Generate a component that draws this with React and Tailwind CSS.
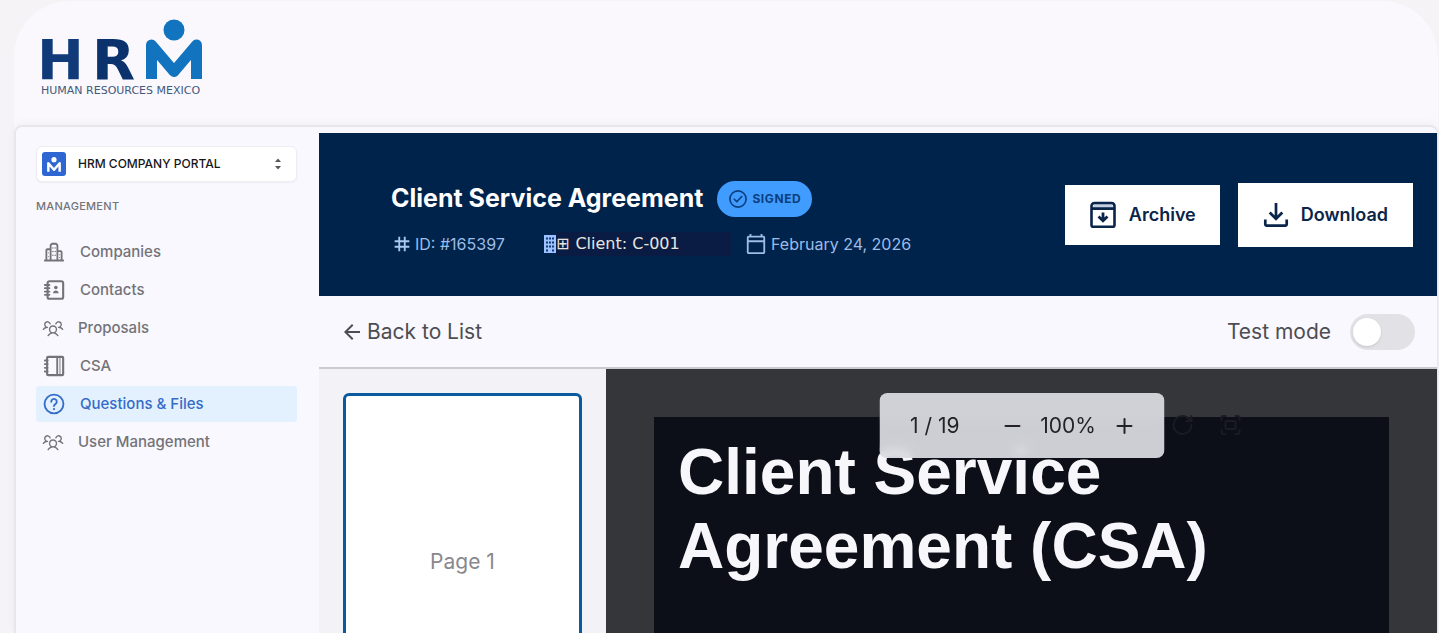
import React, { useState } from "react";
import { MdTag, MdOutlineCalendarToday, MdArrowBack } from "react-icons/md";
import { PiUsersThree } from "react-icons/pi";
import { Fullscreen, Minus, Plus, RotateCw } from "lucide-react";

function FigureMark({ className }) {
  return (
    <svg viewBox="0 0 56 61" className={className} fill="none" aria-hidden="true">
      <circle cx="28" cy="11" r="10.5" fill="currentColor" />
      <path
        d="M5 59.500V25.500L28 52L51 25.500V59.500"
        stroke="currentColor"
        strokeWidth="10"
        strokeLinejoin="round"
      />
    </svg>
  );
}

function Logo() {
  return (
    <svg
      viewBox="-6 0 170 80"
      className="h-20 w-[170px]"
      role="img"
      aria-label="HRM Human Resources Mexico"
    >
      <g className="font-['DejaVu_Sans',sans-serif]">
        <text x="-5" y="60" fontSize="56" fontWeight="700" fill="#103b78">
          H
        </text>
        <text x="50" y="60" fontSize="56" fontWeight="700" fill="#0b326d">
          R
        </text>
        <text x="-1" y="75" fontSize="11" fill="#41597f">
          HUMAN RESOURCES MEXICO
        </text>
      </g>
      <circle cx="132" cy="11" r="10.500" fill="#1273be" />
      <path
        d="M109.500 60V26L132 52.500L154.500 26V60"
        fill="none"
        stroke="#1273be"
        strokeWidth="11"
        strokeLinejoin="round"
      />
    </svg>
  );
}

const line = {
  viewBox: "0 0 24 24",
  fill: "none",
  stroke: "currentColor",
  strokeWidth: 2,
  strokeLinecap: "round",
  strokeLinejoin: "round",
  "aria-hidden": true,
};

const CompaniesIcon = () => (
  <svg {...line} className="size-[22px]">
    <path d="M2 21.300h20M3.700 21V10a1 1 0 0 1 1-1H8M8.300 21V4.500L9.800 3h4.400l1.500 1.500V21M16 11h3.300a1 1 0 0 1 1 1V21" />
    <path d="M10.800 7.500v0M13.300 7.500v0M10.800 11.500v0M13.300 11.500v0M10.800 15.500v0M13.300 15.500v0" strokeWidth="1.600" />
    <path d="M6 13v0M6 17v0M18 15v0M18 18v0" strokeWidth="1" />
  </svg>
);

const ContactsIcon = () => (
  <svg {...line} className="size-[22px]">
    <rect x="5" y="2.500" width="17" height="19" rx="2" strokeWidth="2.300" />
    <path d="M2 6.500h5M2 10h5M2 13.700h5M2 17.300h5" />
    <circle cx="14" cy="9.300" r="2" fill="currentColor" stroke="none" />
    <path d="M11 15.500c0-4 6-4 6 0z" fill="currentColor" stroke="none" />
  </svg>
);

const NotebookIcon = () => (
  <svg {...line} className="size-[22px]">
    <rect x="4.500" y="2" width="17.500" height="20" rx="1" strokeWidth="2.300" />
    <path d="M15.500 2v20" />
    <path d="M18.500 2v20" strokeWidth="1" />
    <path d="M2 6h3M2 10h3M2 14h3M2 18h3" />
  </svg>
);

const QuestionIcon = () => (
  <svg {...line} className="size-[22px]">
    <circle cx="12" cy="12" r="10.300" />
    <path d="M9 9.500a3 3 0 1 1 4.500 2.600c-1 .600-1.500 1.100-1.500 2.200" />
    <path d="M12 17.500v0" strokeWidth="2.400" />
  </svg>
);

const ArchiveIcon = () => (
  <svg viewBox="0 0 28 28" className="size-7" fill="none" aria-hidden="true">
    <path d="M3 7l3-4.500h16L25 7z" fill="#c3cfe2" />
    <path
      d="M2.500 7.500V5.200Q2.500 2 5.700 2h16.600q3.200 0 3.200 3.200V24q0 1.800-1.800 1.800H4.300Q2.500 25.800 2.500 24zM3 7.600h22"
      stroke="currentColor"
      strokeWidth="2.600"
      strokeLinejoin="round"
    />
    <path d="M14 11.500v7.500M9.500 15.500L14 19.800l4.500-4.300" stroke="currentColor" strokeWidth="2.800" />
  </svg>
);

const DownloadIcon = () => (
  <svg
    viewBox="0 0 26 26"
    className="size-[26px]"
    fill="none"
    stroke="currentColor"
    strokeWidth="2.700"
    aria-hidden="true"
  >
    <path d="M13 1v15M6.700 10.500L13 16.800l6.300-6.300" />
    <path d="M2.300 17.500V22q0 1.700 1.700 1.700h18q1.700 0 1.700-1.700v-4.500" />
  </svg>
);

const BuildingGridIcon = () => (
  <svg viewBox="0 0 12 18" className="h-[18px] w-3" aria-hidden="true">
    <rect width="12" height="18" fill="#9cc3ff" />
    <path
      d="M2 2.500h2v2H2zM5 2.500h2v2H5zM8 2.500h2v2H8zM2 6.500h2v2H2zM5 6.500h2v2H5zM8 6.500h2v2H8zM2 10.500h2v2H2zM5 10.500h2v2H5zM8 10.500h2v2H8zM2 14.500h2v2H2zM8 14.500h2v2H8z"
      fill="#0f3a75"
    />
  </svg>
);

const SignedIcon = () => (
  <svg {...line} className="size-5">
    <circle cx="12" cy="12" r="9.700" />
    <path d="M7.500 12.300l3 3 6-6.300" />
  </svg>
);

const SidebarOptions = [
  { id: 1, name: "Companies", icon: <CompaniesIcon /> },
  { id: 2, name: "Contacts", icon: <ContactsIcon /> },
  { id: 3, name: "Proposals", icon: <PiUsersThree className="size-[22px]" />, wide: true },
  { id: 4, name: "CSA", icon: <NotebookIcon /> },
  { id: 5, name: "Questions & Files", icon: <QuestionIcon /> },
  { id: 6, name: "User Management", icon: <PiUsersThree className="size-[22px]" />, wide: true },
];

function Sidebar() {
  const [active, setActive] = useState(5);

  return (
    <aside className="w-[303px] shrink-0 pt-[19px] pr-[22px] pl-5">
      <button className="flex h-9 w-full items-center rounded-md border border-[#efedf2] bg-white pr-3 pl-[5px] shadow-xs">
        <span className="flex size-6 items-center justify-center rounded-[3px] bg-[#2e67d1] text-white">
          <FigureMark className="h-[15px] w-[14px]" />
        </span>
        <span className="ml-3 text-[12px] font-medium text-[#16161a]">
          HRM COMPANY PORTAL
        </span>
        <svg viewBox="0 0 12 14" className="ml-auto h-3.5 w-3" fill="#55555a" aria-hidden="true">
          <path d="M3 5l3-3.500L9 5zM3 9l3 3.500L9 9z" />
        </svg>
      </button>
      <h2 className="mt-4 text-[11px] leading-4 font-medium tracking-wide text-[#74747a]">
        MANAGEMENT
      </h2>
      <nav className="mt-5 flex flex-col gap-0.5">
        {SidebarOptions.map((item) => (
          <a
            key={item.id}
            href="#"
            onClick={() => setActive(item.id)}
            className={`flex h-9 items-center rounded-[3px] text-[15px] font-medium ${
              item.wide ? "gap-3.5 pl-1.5" : "gap-[15px] pl-[7px]"
            } ${
              active === item.id ? "bg-[#e3f1ff] text-[#356bc8]" : "text-[#737378]"
            }`}
          >
            {item.icon}
            {item.name}
          </a>
        ))}
      </nav>
    </aside>
  );
}

function AgreementHeader() {
  return (
    <header className="flex items-center justify-between bg-[#00234b] py-10 pr-6 pl-[72px]">
      <div className="pt-2">
        <div className="flex h-9 items-center gap-3.5">
          <h1 className="text-[25px] font-bold text-white">
            Client Service Agreement
          </h1>
          <span className="flex h-9 items-center gap-1 rounded-full bg-[#409cff] px-[11px] text-[12px] font-bold tracking-wider text-[#0b3f7d]">
            <SignedIcon />
            SIGNED
          </span>
        </div>
        <div className="mt-[15px] flex h-6 items-center text-[16px] text-[#9dbce6]">
          <span className="flex w-[153px] items-center gap-0.5">
            <MdTag className="size-[22px] text-[#a9c9f5]" />
            ID: #165397
          </span>
          <span className="flex w-[187px] items-center">
            <BuildingGridIcon />
            <span className="flex h-6 flex-1 items-center gap-1.5 bg-[#0a1b44] font-['DejaVu_Sans',sans-serif] text-[#e6e6e0]">
              <span>⊞</span>
              Client: C-001
            </span>
          </span>
          <span className="ml-3.5 flex items-center gap-1">
            <MdOutlineCalendarToday className="size-[22px]" />
            February 24, 2026
          </span>
        </div>
      </div>
      <div className="flex items-center gap-[18px] text-[18px] font-semibold text-[#0b2449]">
        <button className="flex h-[60px] items-center gap-3 bg-white px-6">
          <ArchiveIcon />
          Archive
        </button>
        <button className="flex h-16 items-center gap-3 bg-white px-[25px]">
          <DownloadIcon />
          Download
        </button>
      </div>
    </header>
  );
}

function ViewerToolbar() {
  return (
    <div className="absolute top-6 left-1/2 -translate-x-1/2">
      <div className="flex h-[65px] w-[285px] items-center rounded-lg bg-[#dddde3]/93 pl-[31px] text-[21px] text-[#232327] backdrop-blur-xs">
        <span className="w-[90px]">1 / 19</span>
        <button aria-label="Zoom out">
          <Minus className="size-6" />
        </button>
        <span className="w-[88px] text-center">100%</span>
        <button aria-label="Zoom in">
          <Plus className="size-6" />
        </button>
      </div>
      <div className="absolute top-5 left-full flex gap-6 pl-1.5 text-[#1a1c23]">
        <button aria-label="Rotate">
          <RotateCw className="size-6" />
        </button>
        <button aria-label="Fit page">
          <Fullscreen className="size-6" />
        </button>
      </div>
    </div>
  );
}

function App() {
  const [testMode, setTestMode] = useState(false);

  return (
    <div className="flex h-screen flex-col overflow-hidden bg-[#f5f3f6] pt-px pr-px font-['Inter',sans-serif]">
      <div className="ml-3.5 flex min-h-0 flex-1 flex-col rounded-t-[56px] bg-[#faf8fc]">
        {/* Brand */}
        <div className="h-[124px] shrink-0 pt-[18px] pl-[22px]">
          <Logo />
        </div>

        <div className="flex min-h-0 flex-1 rounded-t-lg border-2 border-r border-b-0 border-[#e8e6eb] bg-[#f9f8fe] shadow-[0_-2px_8px_rgba(0,0,0,0.04)]">
          <Sidebar />

          <main className="flex min-w-0 flex-1 flex-col pt-1.5">
            <AgreementHeader />

            {/* Back link and test switch */}
            <div className="flex h-[73px] shrink-0 items-center justify-between border-b-2 border-[#cbcbd0] pr-[22px] pl-[21px] text-[21px] text-[#4d4d52]">
              <a href="#" className="flex items-center gap-[3px]">
                <MdArrowBack className="size-6" />
                Back to List
              </a>
              <label className="flex items-center gap-[19px]">
                Test mode
                <input
                  type="checkbox"
                  role="switch"
                  checked={testMode}
                  onChange={() => setTestMode(!testMode)}
                  className="flex h-9 w-[65px] appearance-none items-center rounded-full bg-[#e2e2e6] px-[3px] before:size-[28px] before:rounded-full before:bg-white before:shadow-sm before:content-[''] checked:justify-end checked:bg-[#409cff]"
                />
              </label>
            </div>

            <div className="flex min-h-0 flex-1">
              <div className="w-[287px] shrink-0 overflow-hidden bg-[#f3f3f7] px-6 pt-6">
                <button className="flex aspect-[210/297] w-full items-center justify-center rounded-md border-3 border-[#0b5a9e] bg-white text-[21px] text-[#88888d]">
                  Page 1
                </button>
              </div>

              <div className="relative flex min-w-0 flex-1 flex-col bg-[#35363a] px-12 pt-12">
                <article className="flex-1 bg-[#0d0f18] px-6 pt-[18px]">
                  <h2 className="max-w-[560px] font-['Liberation_Sans',sans-serif] text-[64px] leading-[74px] font-bold text-[#f6f6fb]">
                    Client Service Agreement (CSA)
                  </h2>
                </article>
                <ViewerToolbar />
              </div>
            </div>
          </main>
        </div>
      </div>
    </div>
  );
}

export default App;
